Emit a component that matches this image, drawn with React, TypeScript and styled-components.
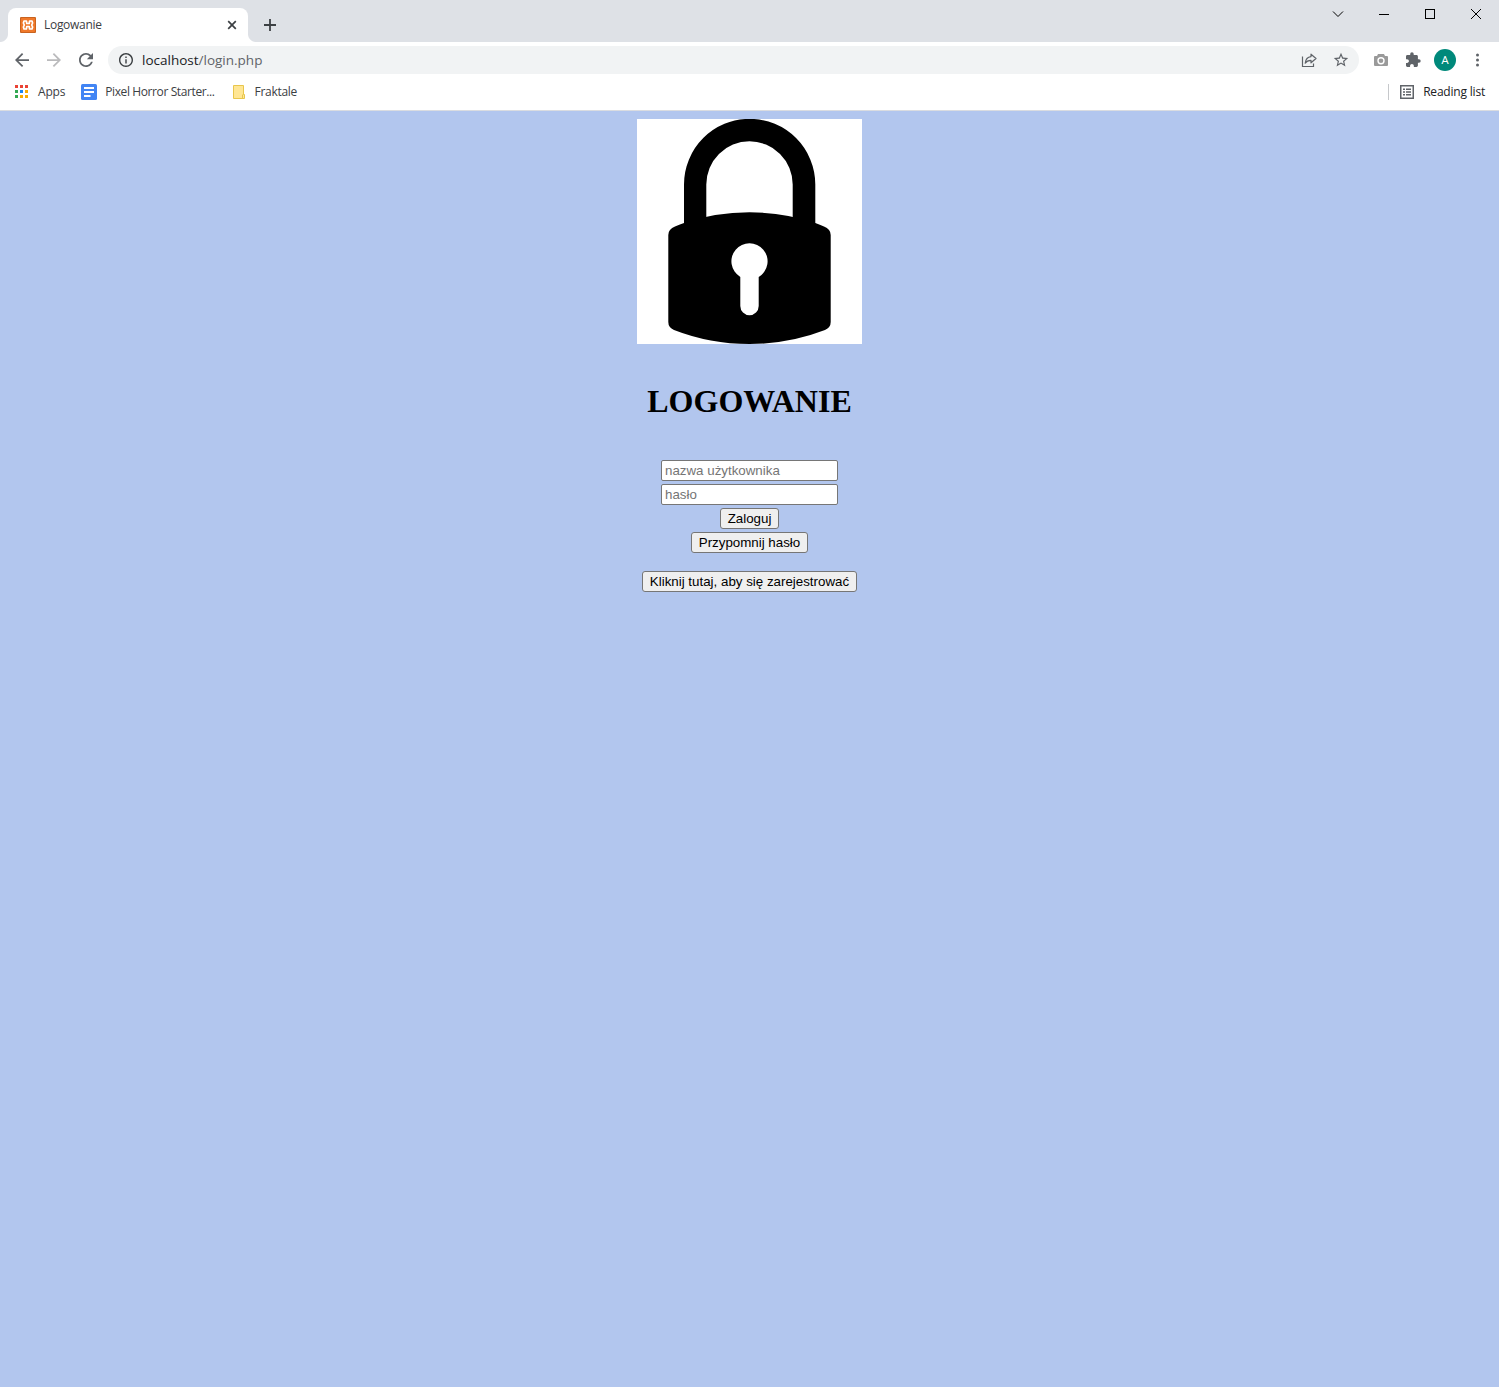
import React from 'react';
import styled, { createGlobalStyle } from 'styled-components';

const GlobalStyle = createGlobalStyle`
  *, *::before, *::after { box-sizing: border-box; }
  html, body { margin: 0; padding: 0; }
  body { background: #b2c6ee; overflow: hidden; }
  svg { display: block; flex: none; }
`;

const Window = styled.div`
  display: flex;
  flex-direction: column;
  min-height: 100vh;
  font-family: 'Open Sans', 'Noto Sans', sans-serif;
  font-size: 12px;
  color: #3c4043;
`;

const TitleBar = styled.header`
  display: flex;
  height: 42px;
  background: #dee1e6;
`;

const TabStrip = styled.div`
  display: flex;
  flex: 1;
  align-items: flex-end;
  padding-left: 8px;
`;

const Tab = styled.div`
  position: relative;
  display: flex;
  align-items: center;
  width: 240px;
  height: 34px;
  padding: 0 10px 0 12px;
  border-radius: 8px 8px 0 0;
  background: #fff;

  &::before,
  &::after {
    content: '';
    position: absolute;
    bottom: 0;
    width: 8px;
    height: 8px;
  }
  &::before {
    left: -8px;
    background: radial-gradient(circle at 0 0, transparent 7.5px, #fff 8.5px);
  }
  &::after {
    right: -8px;
    background: radial-gradient(circle at 100% 0, transparent 7.5px, #fff 8.5px);
  }
`;

const Label = styled.span<{ $size?: number; $spacing?: number; $color?: string }>`
  font-size: ${(p) => p.$size ?? 12}px;
  letter-spacing: ${(p) => p.$spacing ?? 0}px;
  color: ${(p) => p.$color ?? '#3c4043'};
  line-height: 16px;
  white-space: nowrap;
`;

const TabTitle = styled(Label)`
  flex: 1;
  margin-left: 8px;
`;

const IconButton = styled.button<{ $w?: number; $h?: number; $color?: string }>`
  display: flex;
  flex: none;
  align-items: center;
  justify-content: center;
  width: ${(p) => p.$w ?? 32}px;
  height: ${(p) => p.$h ?? 28}px;
  padding: 0;
  border: 0;
  background: none;
  color: ${(p) => p.$color ?? '#5f6368'};
`;

const NewTab = styled(IconButton)`
  margin: 0 0 3px 8px;
`;

const WindowControls = styled.div`
  display: flex;
  height: 28px;
`;

const Toolbar = styled.div`
  display: flex;
  align-items: center;
  height: 36px;
  padding: 0 6px;
  background: #fff;
`;

const AddressBar = styled.div`
  display: flex;
  flex: 1;
  align-items: center;
  height: 28px;
  margin: 0 6px;
  padding: 0 2px 0 9px;
  border-radius: 14px;
  background: #f1f3f4;
`;

const Url = styled.div`
  flex: 1;
  margin-left: 7px;
  font-size: 13.5px;
  line-height: 20px;
  color: #5f6368;
  white-space: nowrap;

  b { font-weight: 400; color: #202124; }
`;

const AvatarSlot = styled.div`
  display: flex;
  justify-content: center;
  width: 32px;
`;

const Avatar = styled.div`
  display: flex;
  align-items: center;
  justify-content: center;
  width: 22px;
  height: 22px;
  border-radius: 50%;
  background: #00897b;
  color: #fff;
  font: 11.5px Roboto, sans-serif;
`;

const BookmarksBar = styled.nav`
  display: flex;
  align-items: center;
  height: 33px;
  padding: 0 14px 4px;
  border-bottom: 1px solid #dadce0;
  background: #fff;
`;

const Bookmark = styled.div<{ $gap: number; $after?: number }>`
  display: flex;
  align-items: center;
  gap: ${(p) => p.$gap}px;
  margin-right: ${(p) => p.$after ?? 0}px;
`;

const Spacer = styled.div`
  flex: 1;
`;

const Divider = styled.div`
  width: 1px;
  height: 16px;
  margin-right: 11px;
  background: #c6c8cb;
`;

const Page = styled.main`
  display: flex;
  flex: 1;
  flex-direction: column;
  align-items: center;
  padding-top: 8px;
  background: #b2c6ee;
`;

const Heading = styled.h1`
  margin: 39px 0 40px;
  font: bold 32px/37px 'Liberation Serif', 'Times New Roman', serif;
  color: #000;
`;

const LoginForm = styled.form`
  display: flex;
  flex-direction: column;
  align-items: center;
  gap: 3px;
`;

const Field = styled.input`
  width: 177px;
  height: 21px;
  margin: 0;
  padding: 1px 3px;
  border: 1px solid #767676;
  border-radius: 2px;
  background: #fff;
  font: 13.333px 'Liberation Sans', Arial, sans-serif;

  &::placeholder { color: #757575; opacity: 1; }
`;

const FormButton = styled.button<{ $w: number; $top?: number }>`
  width: ${(p) => p.$w}px;
  height: 21px;
  margin: ${(p) => p.$top ?? 0}px 0 0;
  padding: 0;
  border: 1px solid #767676;
  border-radius: 3px;
  background: #efefef;
  color: #000;
  font: 13.333px/19px 'Liberation Sans', Arial, sans-serif;
  white-space: nowrap;
`;

const Favicon = () => (
  <svg width="16" height="16" viewBox="0 0 16 16">
    <rect width="16" height="16" rx="1" fill="#c9631f" />
    <rect x="1" y="1" width="14" height="14" rx="1" fill="#f0792a" />
    <path
      d="M6.800 6.500H9.200L9.600 4H12L12.600 6L11.700 8L12.600 10L12 12H9.600L9.200 9.500H6.800L6.400 12H4L3.400 10L4.300 8L3.400 6L4 4H6.400Z"
      fill="none"
      stroke="#fff"
      strokeWidth="1.700"
      strokeLinejoin="round"
    />
  </svg>
);

/* 24-unit glyph drawn at `scale` inside an even-sized box, so it centres on whole pixels */
const Glyph = ({ size, scale, d }: { size: number; scale: number; d: string }) => {
  const span = size / scale;
  const start = 12 - span / 2;
  return (
    <svg width={size} height={size} viewBox={`${start} ${start} ${span} ${span}`} fill="currentColor">
      <path d={d} />
    </svg>
  );
};

const BACK = 'M20 11H7.83l5.59-5.59L12 4l-8 8 8 8 1.41-1.41L7.83 13H20v-2z';
const FORWARD = 'M12 4l-1.41 1.41L16.17 11H4v2h12.17l-5.58 5.59L12 20l8-8z';
const RELOAD =
  'M17.65 6.35C16.2 4.9 14.21 4 12 4c-4.42 0-7.99 3.58-7.99 8s3.57 8 7.99 8c3.73 0 6.84-2.55 7.73-6h-2.08c-.82 2.33-3.04 4-5.65 4-3.31 0-6-2.69-6-6s2.69-6 6-6c1.66 0 3.14.69 4.22 1.78L13 11h7V4l-2.35 2.35z';
const INFO =
  'M11 7h2v2h-2zm0 4h2v6h-2zm1-9C6.48 2 2 6.48 2 12s4.48 10 10 10 10-4.48 10-10S17.52 2 12 2zm0 18c-4.41 0-8-3.59-8-8s3.59-8 8-8 8 3.59 8 8-3.59 8-8 8z';
const STAR =
  'M22 9.24l-7.19-.62L12 2 9.19 8.63 2 9.24l5.46 4.73L5.82 21 12 17.27 18.18 21l-1.63-7.03L22 9.24zM12 15.4l-3.76 2.27 1-4.28-3.32-2.88 4.38-.38L12 6.1l1.71 4.04 4.38.38-3.32 2.88 1 4.28L12 15.4z';
const PUZZLE =
  'M20.5 11H19V7c0-1.1-.9-2-2-2h-4V3.500a2.500 2.500 0 0 0-5 0V5H4c-1.100 0-1.990.9-1.990 2v3.800H3.500c1.490 0 2.700 1.210 2.700 2.700s-1.210 2.700-2.700 2.700H2V20c0 1.100.9 2 2 2h3.800v-1.500c0-1.490 1.210-2.700 2.700-2.700s2.700 1.210 2.700 2.700V22H17c1.100 0 2-.9 2-2v-4h1.500a2.500 2.500 0 0 0 0-5z';

const ShareIcon = () => (
  <svg width="16" height="16" viewBox="0 0 16 16" fill="none" stroke="currentColor" strokeWidth="1.200">
    <path d="M1.500 4.500V14.500H12.500V11.500" />
    <path d="M10 2.200L15 6.500L10 10.800V8.300C7.300 8.300 5.400 9.200 4.200 11.200C4.600 7.600 6.500 5 10 4.600Z" strokeLinejoin="round" />
  </svg>
);

const CameraIcon = () => (
  <svg width="16" height="16" viewBox="0 0 16 16">
    <path d="M5 2H11L12 4H14Q15 4 15 5V13Q15 14 14 14H2Q1 14 1 13V5Q1 4 2 4H4Z" fill="#9a9a9a" />
    <circle cx="8" cy="8.700" r="3" fill="#9a9a9a" stroke="#fff" strokeWidth="1.400" />
  </svg>
);

const MenuIcon = () => (
  <svg width="16" height="16" viewBox="0 0 16 16" fill="currentColor">
    <circle cx="8.500" cy="3" r="1.500" />
    <circle cx="8.500" cy="8" r="1.500" />
    <circle cx="8.500" cy="13" r="1.500" />
  </svg>
);

const APP_COLORS = [
  ['#ea4335', '#ea4335', '#ea4335'],
  ['#34a853', '#1a85f0', '#f9ab00'],
  ['#34a853', '#f9ab00', '#f9ab00'],
];

const AppsIcon = () => (
  <svg width="15" height="15" viewBox="0 0 15 15">
    {APP_COLORS.map((row, r) =>
      row.map((c, i) => <rect key={`${r}-${i}`} x={1 + i * 5} y={r * 5} width="3" height="3" fill={c} />),
    )}
  </svg>
);

const DocIcon = () => (
  <svg width="16" height="16" viewBox="0 0 16 16">
    <rect width="16" height="16" rx="1.500" fill="#4285f4" />
    <path d="M3 4H13M3 8H13M3 12H9.500" stroke="#fff" strokeWidth="1.800" />
  </svg>
);

const FolderIcon = () => (
  <svg width="12" height="14" viewBox="0 0 12 14">
    <path d="M.5.5H10.500V9.500H11.500V13.500H.5Z" fill="#ffe694" stroke="#e8c64c" />
    <path d="M9.500 13V10Q9.500 9.500 10.500 9.500" fill="none" stroke="#e8c64c" />
  </svg>
);

const ReadingIcon = () => (
  <svg width="14" height="14" viewBox="0 0 14 14">
    <rect x=".75" y=".75" width="12.500" height="12.500" fill="none" stroke="#5f6368" strokeWidth="1.500" />
    <path d="M3 4.250H5M6 4.250H11M3 7H5M6 7H11M3 9.750H5M6 9.750H11" stroke="#5f6368" strokeWidth="1.300" />
  </svg>
);

const Padlock = () => (
  <svg width="225" height="225" viewBox="0 0 225 225" role="img" aria-label="lock">
    <rect width="225" height="225" fill="#fff" />
    <path d="M47 106V65.500A65.600 65.600 0 0 1 178.300 65.500V106L155.700 100V65.500A43.200 43.200 0 0 0 69.300 65.500V100Z" />
    <path d="M38 107.500Q42 105.600 47 104Q78 93.300 112.500 93.300T178.300 104Q183 105.600 187 107.500Q193.700 110 193.700 116V203Q193.700 208.500 188 211Q152 225 112.500 225T37 211Q31.300 208.500 31.300 203V116Q31.300 110 38 107.500Z" />
    <path
      d="M103.300 157.900A18.100 18.100 0 1 1 121.700 157.900V187A9.200 9.200 0 0 1 103.300 187Z"
      fill="#fff"
    />
  </svg>
);

export default function App() {
  return (
    <Window>
      <GlobalStyle />
      <TitleBar>
        <TabStrip>
          <Tab>
            <Favicon />
            <TabTitle $spacing={-0.3}>Logowanie</TabTitle>
            <IconButton $w={12} $h={16} $color="#3c4043">
              <svg width="10" height="10" viewBox="0 0 10 10" stroke="currentColor" strokeWidth="1.700">
                <path d="M1.200 1.200L8.800 8.800M8.800 1.200L1.200 8.800" />
              </svg>
            </IconButton>
          </Tab>
          <NewTab $w={28} $color="#3c4043">
            <svg width="12" height="12" viewBox="0 0 12 12" stroke="currentColor" strokeWidth="1.800">
              <path d="M6 0V12M0 6H12" />
            </svg>
          </NewTab>
        </TabStrip>
        <WindowControls>
          <IconButton $w={46} $color="#000">
            <svg width="12" height="8" viewBox="0 0 12 8" fill="none" stroke="currentColor">
              <path d="M1 1.500L6 6.500L11 1.500" />
            </svg>
          </IconButton>
          <IconButton $w={46} $color="#000">
            <svg width="10" height="10" viewBox="0 0 10 10" fill="currentColor">
              <rect y="5" width="10" height="1" />
            </svg>
          </IconButton>
          <IconButton $w={46} $color="#000">
            <svg width="10" height="10" viewBox="0 0 10 10" fill="none" stroke="currentColor">
              <rect x=".5" y=".5" width="9" height="9" />
            </svg>
          </IconButton>
          <IconButton $w={46} $color="#000">
            <svg width="10" height="10" viewBox="0 0 10 10" stroke="currentColor">
              <path d="M0 0L10 10M10 0L0 10" />
            </svg>
          </IconButton>
        </WindowControls>
      </TitleBar>

      <Toolbar>
        <IconButton><Glyph size={22} scale={0.875} d={BACK} /></IconButton>
        <IconButton $color="#bababc"><Glyph size={22} scale={0.875} d={FORWARD} /></IconButton>
        <IconButton><Glyph size={22} scale={0.875} d={RELOAD} /></IconButton>
        <AddressBar>
          <Glyph size={18} scale={0.7} d={INFO} />
          <Url><b>localhost</b>/login.php</Url>
          <IconButton><ShareIcon /></IconButton>
          <IconButton><Glyph size={18} scale={0.72} d={STAR} /></IconButton>
        </AddressBar>
        <IconButton><CameraIcon /></IconButton>
        <IconButton><Glyph size={18} scale={0.7} d={PUZZLE} /></IconButton>
        <AvatarSlot><Avatar>A</Avatar></AvatarSlot>
        <IconButton><MenuIcon /></IconButton>
      </Toolbar>

      <BookmarksBar>
        <Bookmark $gap={9} $after={16}>
          <AppsIcon />
          <Label $spacing={-0.2}>Apps</Label>
        </Bookmark>
        <Bookmark $gap={8} $after={18}>
          <DocIcon />
          <Label $spacing={-0.39}>Pixel Horror Starter...</Label>
        </Bookmark>
        <Bookmark $gap={10}>
          <FolderIcon />
          <Label $spacing={-0.3}>Fraktale</Label>
        </Bookmark>
        <Spacer />
        <Divider />
        <Bookmark $gap={9}>
          <ReadingIcon />
          <Label $spacing={-0.2} $color="#202124">Reading list</Label>
        </Bookmark>
      </BookmarksBar>

      <Page>
        <Padlock />
        <Heading>LOGOWANIE</Heading>
        <LoginForm onSubmit={(e) => e.preventDefault()}>
          <Field type="text" placeholder="nazwa użytkownika" />
          <Field type="password" placeholder="hasło" />
          <FormButton type="submit" $w={59}>Zaloguj</FormButton>
          <FormButton type="button" $w={117}>Przypomnij hasło</FormButton>
          <FormButton type="button" $w={215} $top={15}>Kliknij tutaj, aby się zarejestrować</FormButton>
        </LoginForm>
      </Page>
    </Window>
  );
}
